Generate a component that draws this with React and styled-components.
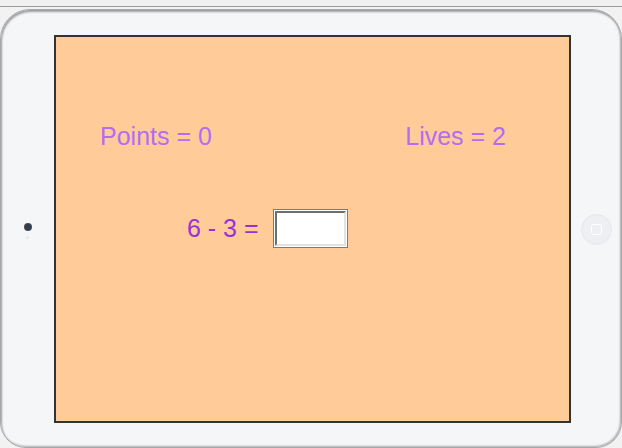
import React from "react";
import styled, { createGlobalStyle } from "styled-components";

const Global = createGlobalStyle`
  html, body {
    margin: 0;
    padding: 0;
    background: #f2f2f2;
    font-family: "Liberation Sans", Arial, sans-serif;
  }
`;

const Page = styled.div`
  width: 622px;
  height: 448px;
  overflow: hidden;
  display: flex;
  flex-direction: column;
`;

const TopStrip = styled.div`
  height: 6px;
  flex: none;
  background: #f0f0f0;
  border-bottom: 1px solid #9c9c9c;
`;

const Device = styled.div`
  margin-top: 2px;
  flex: 1;
  display: flex;
  background: #f5f6f8;
  border: 1px solid #a8a8a8;
  border-radius: 30px 30px 26px 26px;
  box-shadow: inset 1px 2px 2px rgba(0, 0, 0, 0.35),
    inset -1px -1px 2px rgba(0, 0, 0, 0.3);
  padding: 25px 0 24px;
`;

const Bezel = styled.div`
  width: ${(p) => p.$w}px;
  flex: none;
  display: flex;
  flex-direction: column;
  align-items: center;
  justify-content: center;
  gap: 6px;
`;

const Camera = styled.div`
  width: 6px;
  height: 6px;
  border-radius: 50%;
  background: #2f3e52;
  box-shadow: 0 0 0 1px #4a4a4a;
  margin-top: 4px;
`;

const Sensor = styled.div`
  width: 3px;
  height: 3px;
  border-radius: 50%;
  background: #e4e6ea;
`;

const Home = styled.div`
  width: 29px;
  height: 29px;
  border-radius: 50%;
  background: #eeeff2;
  border: 1px solid #e6e7ea;
  display: flex;
  align-items: center;
  justify-content: center;
`;

const HomeSquare = styled.div`
  width: 9px;
  height: 9px;
  border: 1px solid #fff;
  border-radius: 3px;
`;

const Screen = styled.div`
  flex: 1;
  border: 2px solid #333;
  background: #ffcc99;
  display: flex;
  flex-direction: column;
  padding-top: 85px;
`;

const ScoreRow = styled.div`
  display: flex;
  justify-content: space-between;
  padding: 0 63px 0 44px;
  font-size: 25px;
  line-height: 29px;
  color: #b46cf2;
`;

const QuestionRow = styled.div`
  margin-top: 58px;
  padding-left: 131px;
  display: flex;
  align-items: center;
  gap: 14px;
  font-size: 25px;
  line-height: 29px;
  color: #9b30d6;
`;

const AnswerBox = styled.div`
  width: 71px;
  height: 35px;
  border: 1px solid #7b7b7b;
  background: #fff;
  padding: 1px;
  box-sizing: content-box;
  display: flex;
`;

const AnswerInput = styled.input`
  flex: 1;
  min-width: 0;
  margin: 0;
  padding: 0 4px;
  border-style: solid;
  border-width: 2px;
  border-color: #6e6e6e #e2e2e2 #e2e2e2 #6e6e6e;
  background: #fff;
  font-size: 20px;
  font-family: "Liberation Sans", Arial, sans-serif;
  outline: none;
`;

export default function App() {
  return (
    <Page>
      <Global />
      <TopStrip />
      <Device>
        <Bezel $w={53}>
          <Camera />
          <Sensor />
        </Bezel>
        <Screen>
          <ScoreRow>
            <span>Points = 0</span>
            <span>Lives = 2</span>
          </ScoreRow>
          <QuestionRow>
            <span>6 - 3 =</span>
            <AnswerBox>
              <AnswerInput type="text" />
            </AnswerBox>
          </QuestionRow>
        </Screen>
        <Bezel $w={50}>
          <Home>
            <HomeSquare />
          </Home>
        </Bezel>
      </Device>
    </Page>
  );
}
